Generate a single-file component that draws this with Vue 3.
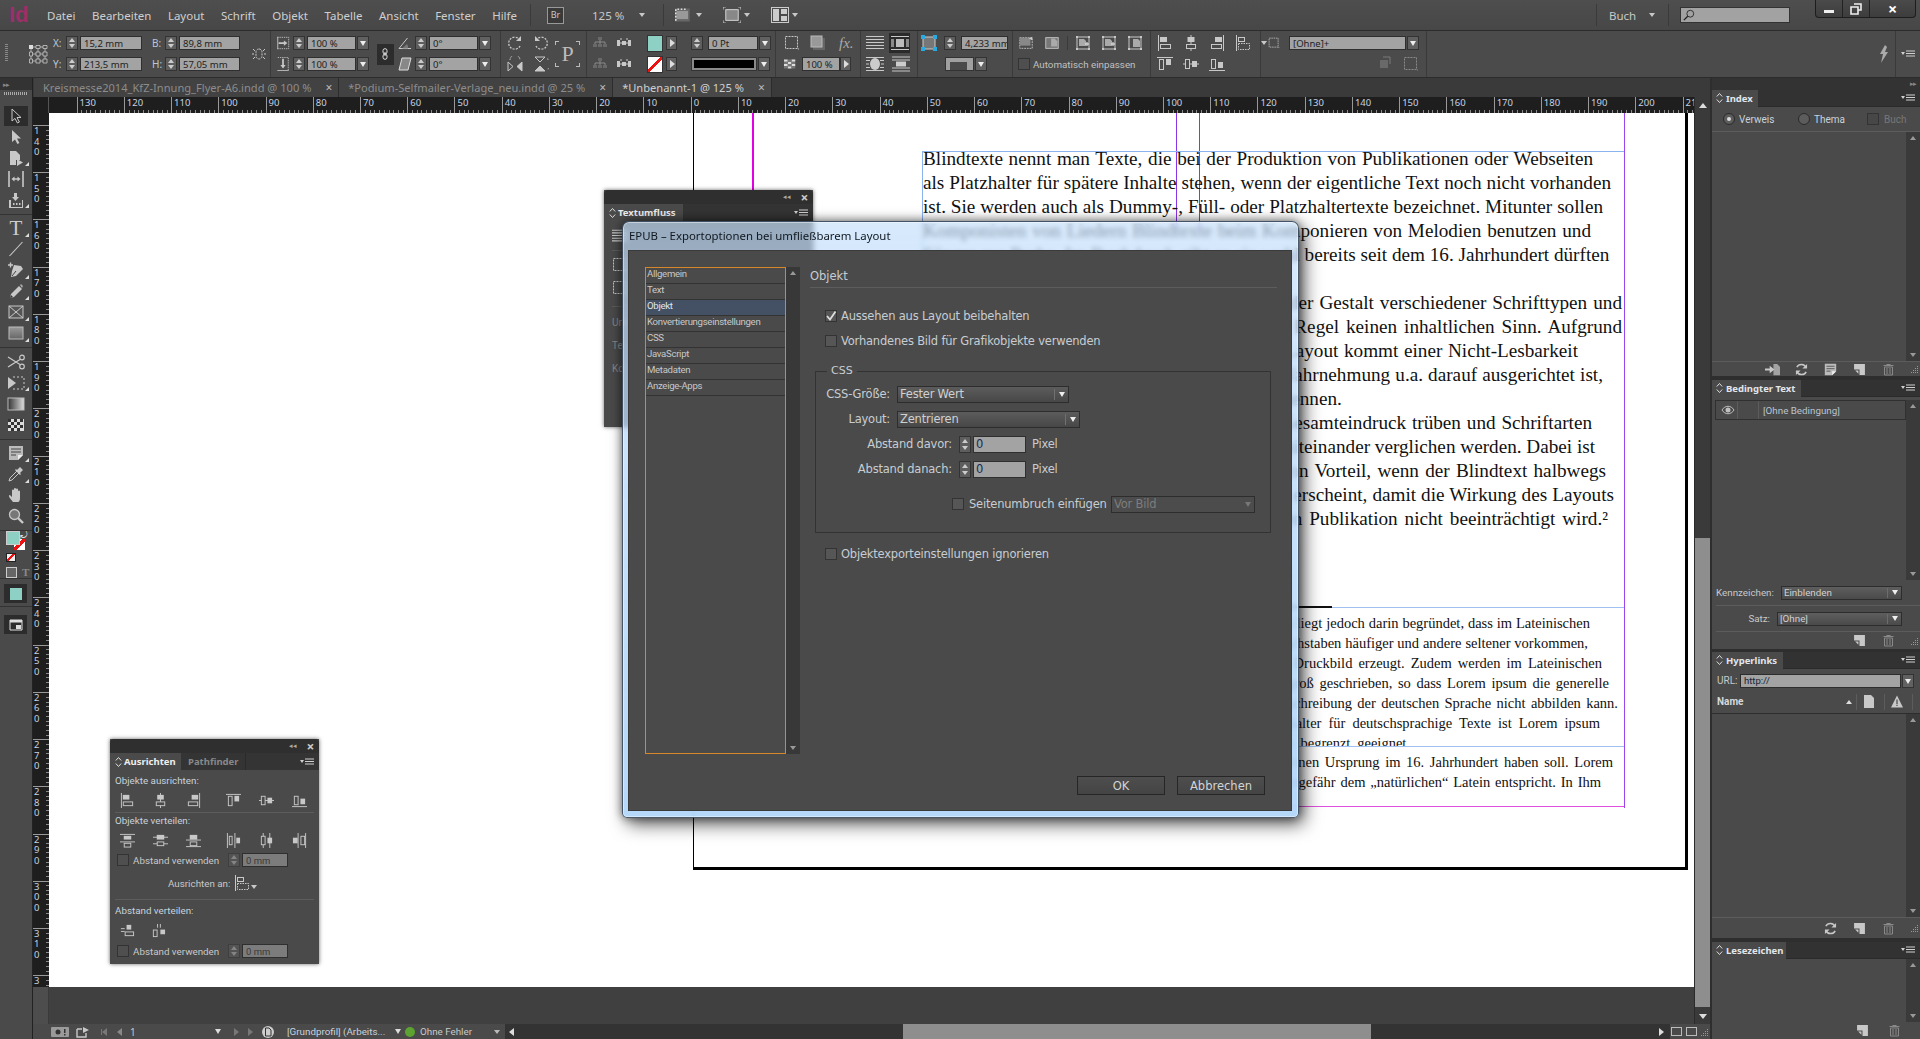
<script setup>
const menus = ['Datei', 'Bearbeiten', 'Layout', 'Schrift', 'Objekt', 'Tabelle', 'Ansicht', 'Fenster', 'Hilfe']

const tabs = [
  { name: 'Kreismesse2014_KfZ-Innung_Flyer-A6.indd @ 100 %' },
  { name: '*Podium-Selfmailer-Verlage_neu.indd @ 25 %' },
  { name: '*Unbenannt-1 @ 125 %', active: true }
]

const hruler = []
for (let v = 130; v > 0; v -= 10) hruler.push(v)
for (let v = 0; v <= 210; v += 10) hruler.push(v)
const vruler = []
for (let v = 140; v <= 320; v += 10) vruler.push(String(v).split(''))

const toolGroups = [
  [{ i: 'sel', on: true }, { i: 'dsel' }, { i: 'pagetool', more: true }, { i: 'gap' }, { i: 'collect', more: true }],
  [{ i: 'T', more: true }, { i: 'line' }, { i: 'pen', more: true }, { i: 'pencil', more: true }, { i: 'framex', more: true }, { i: 'rect', more: true }],
  [{ i: 'scissors' }, { i: 'free', more: true }, { i: 'gradient' }, { i: 'feather' }],
  [{ i: 'note', more: true }, { i: 'dropper', more: true }, { i: 'hand' }, { i: 'zoom' }]
]

const body = [
  { t: 'Blindtexte nennt man Texte, die bei der Produktion von Publikationen oder Webseiten', w: 670 },
  { t: 'als Platzhalter für spätere Inhalte stehen, wenn der eigentliche Text noch nicht vorhanden', w: 688 },
  { t: 'ist. Sie werden auch als Dummy-, Füll- oder Platzhaltertexte bezeichnet. Mitunter sollen', w: 680 },
  { t: 'Komponisten von Liedern Blindtexte beim Komponieren von Melodien benutzen und', w: 668 },
  { t: 'Sänger zur Probe. Im Buchdruck gibt es sie wohl bereits seit dem 16. Jahrhundert dürften', w: 664 },
  { t: '\u00a0', w: 100 },
  { t: 'Sie dienen der Beurteilung vom Layout sowie der Gestalt verschiedener Schrifttypen und', w: 699 },
  { t: 'Schriftgraden und Schriftbildern, haben in der Regel keinen inhaltlichen Sinn. Aufgrund', w: 699 },
  { t: 'seiner Funktion als reiner Füllstoff im ganzen Layout kommt einer Nicht-Lesbarkeit', w: 655 },
  { t: 'eine große Bedeutung zu, da die menschliche Wahrnehmung u.a. darauf ausgerichtet ist,', w: 680 },
  { t: 'bestimmte Muster und Buchstabenfolgen zu erkennen.', w: 415 },
  { t: 'Denn gut lesbarer Blindtext könnte wohl den Gesamteindruck trüben und Schriftarten', w: 669 },
  { t: 'könnten dann nicht mehr objektiv und neutral miteinander verglichen werden. Dabei ist', w: 666 },
  { t: 'es jedoch für die Beurteilung eines Entwurfs von Vorteil, wenn der Blindtext halbwegs', w: 683 },
  { t: 'realistisch und der späteren Textsorte angepasst erscheint, damit die Wirkung des Layouts', w: 691 },
  { t: 'im Gesamten und auf den Leser in der späteren Publikation nicht beeinträchtigt wird.²', w: 685 }
]

const foot1 = [
  { t: 'Die Eignung von Lorem ipsum als Platzhalter für alle Sprachen liegt jedoch darin begründet, dass im Lateinischen', w: 668 },
  { t: 'so wie auch in den meisten europäischen Sprachen einzelne Buchstaben häufiger und andere seltener vorkommen,', w: 666 },
  { t: 'was bei der Gestaltung eines Entwurfs ein sehr realistisches Druckbild erzeugt. Zudem werden im Lateinischen', w: 680 },
  { t: 'nur die Satzanfänge und Eigennamen, nicht die Substantive groß geschrieben, so dass Lorem ipsum die generelle', w: 687 },
  { t: 'Erscheinung von Texten und insbesondere die spezielle Großschreibung der deutschen Sprache nicht abbilden kann.', w: 696 },
  { t: 'Als alleiniger und für wirklich alle Fälle brauchbarer Platzhalter für deutschsprachige Texte ist Lorem ipsum', w: 678 },
  { t: 'somit trotz seiner weiten Verbreitung in der Praxis nur sehr begrenzt geeignet.', w: 488 }
]
const foot2 = [
  { t: 'Es heißt oft, dass der Blindtext auf Cicero zurückgeht und seinen Ursprung im 16. Jahrhundert haben soll. Lorem', w: 691 },
  { t: 'ipsum ist kein echtes Latein, auch wenn es in seiner Gestalt ungefähr dem „natürlichen“ Latein entspricht. In Ihm', w: 679 }
]

const listItems = ['Allgemein', 'Text', 'Objekt', 'Konvertierungseinstellungen', 'CSS', 'JavaScript', 'Metadaten', 'Anzeige-Apps']

const alignRow = ['alignL', 'alignCH', 'alignR', 'alignT', 'alignCV', 'alignB']
const distRow = ['distT', 'distCV', 'distB', 'distL', 'distCH', 'distR']
</script>

<template>
  <div class="app">
    <!-- icon sprite -->
    <svg class="sprite" width="0" height="0">
      <defs>
        <linearGradient id="gv" x1="0" y1="0" x2="0" y2="1"><stop offset="0" stop-color="#999" /><stop offset="1" stop-color="#666" /></linearGradient>
        <linearGradient id="gh" x1="0" y1="0" x2="1" y2="0"><stop offset="0" stop-color="#333" /><stop offset="1" stop-color="#ddd" /></linearGradient>
        <symbol id="sel" viewBox="0 0 16 16"><path d="M4 1v12l3-2.600 2.400 4.600 2-1-2.400-4.500h4z" fill="none" stroke="currentColor" /></symbol>
        <symbol id="dsel" viewBox="0 0 16 16"><path d="M4 1v12l3-2.600 2.400 4.600 2-1-2.400-4.500h4z" fill="currentColor" /></symbol>
        <symbol id="pagetool" viewBox="0 0 16 16"><path d="M2 1h6l4 4v5H8v5H2z" fill="currentColor" /><path d="M9 9l6 3.500L9 16z" fill="currentColor" /></symbol>
        <symbol id="gap" viewBox="0 0 16 16"><path d="M1 0v16M15 0v16" stroke="currentColor" stroke-width="1.600" /><path d="M3.500 8l3-2.500v1.800h3V5.500l3 2.500-3 2.500V8.700h-3v1.800z" fill="currentColor" /></symbol>
        <symbol id="collect" viewBox="0 0 16 16"><path d="M1 8h2v7h11V8h1v8H1z" fill="currentColor" /><path d="M6 1h3v4h2L7.500 9 4 5h2z" fill="currentColor" /><path d="M5 11h1.500v2H5zM8 11h1.500v2H8zM11 11h1.500v2H11z" fill="currentColor" /></symbol>
        <symbol id="line" viewBox="0 0 16 16"><path d="M1.500 15L14.500 1" stroke="currentColor" stroke-width="1.100" /></symbol>
        <symbol id="pen" viewBox="0 0 18 16"><path d="M1 3h5M3.500.5v5" stroke="currentColor" stroke-width="1.400" /><path d="M7 3l7 1 2 3-7 7-5 1 1-6z" fill="currentColor" /><path d="M5 14l4-5" stroke="#444" /></symbol>
        <symbol id="pencil" viewBox="0 0 16 16"><path d="M2 15l1-4 8-8 3 3-8 8z" fill="currentColor" /><path d="M12 2l1-1 2 2-1 2z" fill="#aaa" /><path d="M2 15l1-3 2 2z" fill="#333" /></symbol>
        <symbol id="framex" viewBox="0 0 16 16"><rect x="1" y="2" width="14" height="12" fill="#555" stroke="currentColor" /><path d="M1 2l14 12M15 2L1 14" stroke="currentColor" /></symbol>
        <symbol id="rect" viewBox="0 0 16 16"><rect x="1" y="2" width="14" height="12" fill="url(#gv)" stroke="#bbb" /></symbol>
        <symbol id="scissors" viewBox="0 0 18 16"><circle cx="15" cy="3.500" r="2.300" fill="none" stroke="currentColor" stroke-width="1.200" /><circle cx="15" cy="12.500" r="2.300" fill="none" stroke="currentColor" stroke-width="1.200" /><path d="M1 3l12 7.500M1 13l12-7.500" stroke="currentColor" stroke-width="1.300" /></symbol>
        <symbol id="free" viewBox="0 0 18 16"><path d="M1 2v12l8-6z" fill="currentColor" /><path d="M6 2h11v12H6" fill="none" stroke="currentColor" stroke-dasharray="2 2" /></symbol>
        <symbol id="gradient" viewBox="0 0 16 16"><rect x="0" y="2" width="16" height="12" fill="url(#gh)" stroke="#bbb" /></symbol>
        <symbol id="feather" viewBox="0 0 16 16"><rect x="0" y="2" width="16" height="12" fill="#ddd" /><path d="M0 2h3v3H0zM6 2h3v3H6zM12 2h3v3h-3zM3 5h3v3H3zM9 5h3v3H9zM0 8h3v3H0zM6 8h3v3H6zM12 8h3v3h-3zM3 11h3v3H3zM9 11h3v3H9z" fill="#333" /></symbol>
        <symbol id="note" viewBox="0 0 16 16"><path d="M1 1h14v9l-5 5H1z" fill="#bbb" /><path d="M3 4h10M3 7h10M3 10h5" stroke="#444" /><path d="M10 15v-5h5z" fill="#eee" /></symbol>
        <symbol id="dropper" viewBox="0 0 16 16"><path d="M1 15l1-3 7-7 2 2-7 7z" fill="none" stroke="currentColor" /><path d="M9 4l2-2 1-1 3 3-1 1-2 2 1 1-1 1-5-5 1-1z" fill="currentColor" /></symbol>
        <symbol id="hand" viewBox="0 0 16 16"><path d="M5 15C3.500 13 .5 10 1 8.500s2 .5 3 1.500V3.500a1 1 0 012 0V8V2a1 1 0 012 0v6V2.500a1 1 0 012 0V8V4.500a1 1 0 012 0V11c0 2.500-1 4-2 4z" fill="currentColor" /></symbol>
        <symbol id="zoom" viewBox="0 0 16 16"><circle cx="6.500" cy="6.500" r="5" fill="#777" stroke="currentColor" stroke-width="1.300" /><path d="M10 10l5 5" stroke="currentColor" stroke-width="2.400" /></symbol>
        <symbol id="prevmode" viewBox="0 0 14 12"><path d="M1 1h12v10H1z" fill="none" stroke="#ddd" /><path d="M1 1h12v2.500H1z" fill="#ddd" /><path d="M7 6h5v4H7z" fill="#ddd" /></symbol>

        <symbol id="refpt" viewBox="0 0 20 20"><path d="M5 3h6M11 3h6M5 10h12M5 17h12M3 5v10M10 5v10M17 5v10" stroke="currentColor" stroke-width=".8" /><path d="M1 1h4v4H1z" fill="#ddd" /><path d="M8 1.500h4v3H8zM15 1.500h4v3h-4zM1.500 8h3v4h-3zM8 8h4v4H8zM15 8h4v4h-4zM1.500 15h3v4h-3zM8 15h4v4H8zM15 15h4v4h-4z" fill="#4a4a4a" stroke="currentColor" stroke-width=".8" /></symbol>
        <symbol id="link" viewBox="0 0 16 16"><rect x="5" y="3" width="6" height="10" rx="3" fill="none" stroke="currentColor" stroke-dasharray="2 1" /><path d="M2 3l2 2M14 3l-2 2M1 8h2M13 8h2M2 13l2-2M14 13l-2-2" stroke="currentColor" /></symbol>
        <symbol id="scaleh" viewBox="0 0 14 16"><path d="M.5 1.500h13v13H.5" fill="none" stroke="currentColor" stroke-dasharray="1.500 1" /><path d="M1 1v14" stroke="currentColor" /><path d="M2 7h6V5l4 3-4 3V9H2z" fill="currentColor" /></symbol>
        <symbol id="scalev" viewBox="0 0 14 16"><path d="M1 .5h12v15" fill="none" stroke="currentColor" stroke-dasharray="1.500 1" /><path d="M.5 15.500h13" stroke="currentColor" /><path d="M6 2h2v7h2l-3 4-3-4h2z" fill="currentColor" /></symbol>
        <symbol id="chain" viewBox="0 0 12 18"><rect x="3" y="1" width="6" height="8" rx="3" fill="none" stroke="#ddd" stroke-width="1.500" /><rect x="3" y="9" width="6" height="8" rx="3" fill="none" stroke="#ddd" stroke-width="1.500" /><path d="M6 6v6" stroke="#ddd" stroke-width="1.500" /></symbol>
        <symbol id="angle" viewBox="0 0 14 14"><path d="M1 12.500L9.500 2M1 12.500h12" fill="none" stroke="currentColor" /><path d="M9 8a5 5 0 011 4.500H4z" fill="#777" /></symbol>
        <symbol id="shear" viewBox="0 0 14 14"><path d="M4 1h9l-3 12H1z" fill="#888" stroke="#ddd" /></symbol>
        <symbol id="rotcw" viewBox="0 0 16 16"><path d="M13 11a6 6 0 11-1-7" fill="none" stroke="currentColor" stroke-dasharray="2 1.200" stroke-width="1.300" /><path d="M14 1v5h-5z" fill="currentColor" /></symbol>
        <symbol id="rotccw" viewBox="0 0 16 16"><path d="M3 11a6 6 0 101-7" fill="none" stroke="currentColor" stroke-dasharray="2 1.200" stroke-width="1.300" /><path d="M2 1v5h5z" fill="currentColor" /></symbol>
        <symbol id="fliph" viewBox="0 0 16 16"><path d="M1 15V6l5 4.500zM15 15V6l-5 4.500z" fill="none" stroke="currentColor" /><path d="M15 15V6l-5 4.500z" fill="currentColor" /><path d="M3 4a5 5 0 0110 0" fill="none" stroke="currentColor" stroke-dasharray="1.500 1" /></symbol>
        <symbol id="flipv" viewBox="0 0 16 16"><path d="M2 1h10L7 6zM2 15h10L7 10z" fill="none" stroke="currentColor" /><path d="M2 15h10L7 10z" fill="currentColor" /><path d="M14 3a5 5 0 010 10" fill="none" stroke="currentColor" stroke-dasharray="1.500 1" /></symbol>
        <symbol id="tree1" viewBox="0 0 16 16"><path d="M8 5v2M3 9V7h10v2M8 7v2" stroke="currentColor" fill="none" /><path d="M6 2h4v3H6zM1 9h4v3H1zM6 9h4v3H6zM11 9h4v3h-4z" fill="#888" /></symbol>
        <symbol id="tree2" viewBox="0 0 16 16"><path d="M5 5V3M11 5V3M3 8h10" stroke="currentColor" /><path d="M6 6h4v4H6zM1 5h3v6H1zM12 5h3v6h-3z" fill="currentColor" /></symbol>

        <symbol id="fr" viewBox="0 0 16 16"><rect x="1.500" y="1.500" width="12" height="12" fill="none" stroke="currentColor" stroke-dasharray="2 1" /><path d="M14 14l1 0" stroke="currentColor" /></symbol>
        <symbol id="shadow" viewBox="0 0 16 16"><rect x="3" y="3" width="12" height="12" fill="#666" /><rect x="1" y="1" width="11" height="11" fill="#999" stroke="#bbb" /></symbol>
        <symbol id="check" viewBox="0 0 16 16"><path d="M0 2h5v3H0zM10 2h5v3h-5zM5 5h5v3H5zM0 8h5v3H0zM10 8h5v3h-5zM5 11h5v3H5z" fill="#ddd" /><path d="M5 2h5v3H5zM0 5h5v3H0zM10 5h5v3h-5zM5 8h5v3H5zM0 11h5v3H0zM10 11h5v3h-5z" fill="#777" /></symbol>
        <symbol id="wrap0" viewBox="0 0 18 16"><path d="M0 1.500h18M0 4.500h18M0 7.500h18M0 10.500h18M0 13.500h18" stroke="currentColor" stroke-width="1.200" /></symbol>
        <symbol id="wrap1" viewBox="0 0 18 16"><path d="M0 1.500h18M0 14.500h18M0 4v8M18 4v8M2 4v8M16 4v8" stroke="currentColor" stroke-width="1.200" /><rect x="5" y="4" width="8" height="8" fill="#bbb" /></symbol>
        <symbol id="wrap2" viewBox="0 0 18 16"><path d="M0 1.500h18M0 14.500h18M0 4.500h4M14 4.500h4M0 8h3M15 8h3M0 11.500h4M14 11.500h4" stroke="currentColor" stroke-width="1.200" /><ellipse cx="9" cy="8" rx="5" ry="6" fill="#ccc" /></symbol>
        <symbol id="wrap3" viewBox="0 0 18 16"><path d="M0 1h18M0 4h18M0 12h18M0 15h18" stroke="currentColor" stroke-width="1.200" /><rect x="4" y="5.500" width="10" height="5" fill="#ccc" /></symbol>
        <symbol id="corner" viewBox="0 0 16 16"><rect x="2" y="2" width="12" height="12" fill="#777" stroke="#ccc" /><path d="M0 0h4v4H0zM12 0h4v4h-4zM0 12h4v4H0zM12 12h4v4h-4z" fill="#29abe2" /></symbol>
        <symbol id="fit1" viewBox="0 0 18 16"><rect x="2" y="2" width="14" height="12" fill="none" stroke="currentColor" stroke-dasharray="2 1" /><rect x="2" y="2" width="12" height="9" fill="#888" /><path d="M12 3l4-2v4z" fill="currentColor" /></symbol>
        <symbol id="fit2" viewBox="0 0 18 16"><rect x="2" y="2" width="14" height="12" fill="#777" stroke="currentColor" /><path d="M8 3h4l3 3v6H8z" fill="#aaa" /></symbol>
        <symbol id="fit3" viewBox="0 0 16 16"><rect x="2" y="2" width="12" height="12" fill="none" stroke="currentColor" /><path d="M1 1h2v2H1zM13 1h2v2h-2zM1 13h2v2H1zM13 13h2v2h-2z" fill="currentColor" /><path d="M4 4h5l2 2v5H4z" fill="#aaa" /><path d="M10 9h4M12 7v4" stroke="#eee" /></symbol>
        <symbol id="fit4" viewBox="0 0 16 16"><rect x="2" y="2" width="12" height="12" fill="none" stroke="currentColor" /><path d="M1 1h2v2H1zM13 1h2v2h-2zM1 13h2v2H1zM13 13h2v2h-2z" fill="currentColor" /><path d="M6 4h5l2 2v6H6z" fill="#aaa" /></symbol>
        <symbol id="chSlash" viewBox="0 0 16 16"><path d="M2 4h8v8H2z" fill="#888" /><path d="M5 1h7v7" fill="none" stroke="#aaa" /></symbol>

        <symbol id="alignL" viewBox="0 0 16 16"><path d="M1.500 0v16" stroke="currentColor" /><rect x="3" y="2" width="7" height="5" fill="currentColor" /><rect x="3.500" y="9.500" width="10" height="4" fill="none" stroke="currentColor" /></symbol>
        <symbol id="alignCH" viewBox="0 0 16 16"><path d="M8 0v16" stroke="currentColor" /><rect x="4.500" y="2" width="7" height="5" fill="currentColor" /><rect x="3.500" y="9.500" width="9" height="4" fill="#4a4a4a" stroke="currentColor" /></symbol>
        <symbol id="alignR" viewBox="0 0 16 16"><path d="M14.500 0v16" stroke="currentColor" /><rect x="6" y="2" width="7" height="5" fill="currentColor" /><rect x="2.500" y="9.500" width="10" height="4" fill="none" stroke="currentColor" /></symbol>
        <symbol id="alignT" viewBox="0 0 16 16"><path d="M0 1.500h16" stroke="currentColor" /><rect x="2.500" y="3.500" width="4" height="10" fill="none" stroke="currentColor" /><rect x="9" y="3" width="5" height="6" fill="currentColor" /></symbol>
        <symbol id="alignCV" viewBox="0 0 16 16"><path d="M0 8h16" stroke="currentColor" /><rect x="2.500" y="3.500" width="4" height="9" fill="#4a4a4a" stroke="currentColor" /><rect x="9" y="5" width="5" height="6" fill="currentColor" /></symbol>
        <symbol id="alignB" viewBox="0 0 16 16"><path d="M0 14.500h16" stroke="currentColor" /><rect x="2.500" y="3.500" width="4" height="9" fill="none" stroke="currentColor" /><rect x="9" y="6" width="5" height="6" fill="currentColor" /></symbol>
        <symbol id="distT" viewBox="0 0 16 16"><path d="M0 1.500h16M0 9.500h16" stroke="currentColor" /><rect x="4" y="3" width="8" height="4" fill="currentColor" /><rect x="4.500" y="11" width="7" height="4" fill="none" stroke="currentColor" /></symbol>
        <symbol id="distCV" viewBox="0 0 16 16"><path d="M0 4.500h16M0 11.500h16" stroke="currentColor" /><rect x="4" y="2" width="8" height="5" fill="currentColor" /><rect x="4.500" y="9.500" width="7" height="4" fill="#4a4a4a" stroke="currentColor" /></symbol>
        <symbol id="distB" viewBox="0 0 16 16"><path d="M0 7.500h16M0 14.500h16" stroke="currentColor" /><rect x="4" y="2" width="8" height="5" fill="currentColor" /><rect x="4.500" y="9.500" width="7" height="4" fill="none" stroke="currentColor" /></symbol>
        <symbol id="distL" viewBox="0 0 16 16"><path d="M1.500 0v16M9.500 0v16" stroke="currentColor" /><rect x="3.500" y="3.500" width="3" height="9" fill="none" stroke="currentColor" /><rect x="11" y="5" width="4" height="6" fill="currentColor" /></symbol>
        <symbol id="distCH" viewBox="0 0 16 16"><path d="M4.500 0v16M11.500 0v16" stroke="currentColor" /><rect x="2.500" y="3.500" width="4" height="9" fill="#4a4a4a" stroke="currentColor" /><rect x="9" y="5" width="5" height="6" fill="currentColor" /></symbol>
        <symbol id="distR" viewBox="0 0 16 16"><path d="M6.500 0v16M14.500 0v16" stroke="currentColor" /><rect x="1" y="5" width="5" height="6" fill="currentColor" /><rect x="9.500" y="3.500" width="4" height="9" fill="none" stroke="currentColor" /></symbol>
        <symbol id="alignTo" viewBox="0 0 16 16"><path d="M1.500 0v16" stroke="currentColor" /><rect x="3.500" y="2.500" width="6" height="4" fill="none" stroke="currentColor" /><rect x="3.500" y="8.500" width="11" height="6" fill="none" stroke="currentColor" stroke-dasharray="1.500 1" /></symbol>
        <symbol id="spaceV" viewBox="0 0 16 16"><path d="M1 6h4M1 9h4" stroke="currentColor" /><rect x="7" y="2" width="5" height="5" fill="currentColor" /><rect x="5.500" y="9.500" width="9" height="4" fill="none" stroke="currentColor" /></symbol>
        <symbol id="spaceH" viewBox="0 0 16 16"><path d="M7 1v4M10 1v4" stroke="currentColor" /><rect x="2.500" y="7.500" width="4" height="7" fill="none" stroke="currentColor" /><rect x="10" y="7" width="5" height="5" fill="currentColor" /></symbol>

        <symbol id="pmenu" viewBox="0 0 14 8"><path d="M0 2h4L2 5z" fill="currentColor" /><path d="M5 1h9M5 3.500h9M5 6h9" stroke="currentColor" /></symbol>
        <symbol id="newpg" viewBox="0 0 12 12"><path d="M1 1h10v10H6V6H1z" fill="currentColor" /><path d="M2 7h3v3z" fill="currentColor" /></symbol>
        <symbol id="trash" viewBox="0 0 12 13"><path d="M4 1h4v1h3v1H1V2h3z" fill="currentColor" /><path d="M2 4h8v8H2z" fill="none" stroke="currentColor" /><path d="M4.500 5v6M7.500 5v6" stroke="currentColor" /></symbol>
        <symbol id="refresh" viewBox="0 0 14 14"><path d="M12 5a5.500 5.500 0 00-10-.5M2 9a5.500 5.500 0 0010 .5" fill="none" stroke="currentColor" stroke-width="1.600" /><path d="M13 1v5H8zM1 13V8h5z" fill="currentColor" /></symbol>
        <symbol id="eye" viewBox="0 0 14 10"><path d="M1 5c3-5 9-5 12 0-3 5-9 5-12 0z" fill="none" stroke="currentColor" /><circle cx="7" cy="5" r="2.500" fill="currentColor" /></symbol>
        <symbol id="grip" viewBox="0 0 8 8"><path d="M6 1h1v1H6zM4 3h1v1H4zM6 3h1v1H6zM2 5h1v1H2zM4 5h1v1H4zM6 5h1v1H6zM0 7h1v1H0zM2 7h1v1H2zM4 7h1v1H4zM6 7h1v1H6z" fill="currentColor" /></symbol>
        <symbol id="warn" viewBox="0 0 12 12"><path d="M6 0l6 12H0z" fill="currentColor" /><path d="M5.400 4h1.200v4.500H5.400zM5.400 9.300h1.200v1.200H5.400z" fill="#4a4a4a" /></symbol>
        <symbol id="doc" viewBox="0 0 12 13"><path d="M1 0h7l3 3v10H1z" fill="currentColor" /></symbol>
        <symbol id="chev" viewBox="0 0 7 12"><path d="M.8 4.500L3.500 1.500l2.700 3M.8 7.500l2.700 3 2.700-3" fill="none" stroke="currentColor" /></symbol>
        <symbol id="arrowIn" viewBox="0 0 16 12"><path d="M0 5h5V2l5 4-5 4V7H0z" fill="currentColor" /><path d="M9 0h4l3 3v9H9z" fill="currentColor" opacity=".7" /></symbol>
        <symbol id="bolt" viewBox="0 0 10 18"><path d="M6 0L1 9h3L2 18l7-11H6l2-5z" fill="currentColor" /></symbol>
        <symbol id="tick" viewBox="0 0 12 12"><path d="M2 6l3 3.500L10.500 1.500" fill="none" stroke="#ddd" stroke-width="1.800" /></symbol>
        <symbol id="screen" viewBox="0 0 22 16"><path d="M0 0h18v16H0z" fill="#666" /><path d="M2 3h14v10H2z" fill="#999" /><path d="M0 1h2v2H0zM0 5h2v2H0zM0 9h2v2H0zM0 13h2v2H0zM3 0h2v2H3zM7 0h2v2H7zM11 0h2v2h-2z" fill="#ddd" /></symbol>
        <symbol id="screen2" viewBox="0 0 20 18"><rect x="3" y="3" width="14" height="12" fill="#888" stroke="#ddd" /><path d="M0 3V0h3M17 0h3v3M20 15v3h-3M3 18H0v-3" fill="none" stroke="#ccc" /></symbol>
        <symbol id="arrange" viewBox="0 0 18 16"><rect x=".5" y=".5" width="17" height="15" fill="none" stroke="#ccc" /><rect x="2" y="2" width="6" height="12" fill="#ccc" /><rect x="10" y="2" width="6" height="5" fill="#ccc" /><rect x="10" y="9" width="6" height="5" fill="#ccc" /></symbol>
        <symbol id="share" viewBox="0 0 14 12"><path d="M1 3h5M1 3v8h9V7" fill="none" stroke="currentColor" stroke-width="1.400" /><path d="M7 1l6 3-6 3z" fill="currentColor" /></symbol>
        <symbol id="prefl" viewBox="0 0 18 10"><rect width="18" height="10" rx="1" fill="#9a9a9a" /><circle cx="7" cy="5" r="2.500" fill="#333" /><path d="M13 2h1.500v4H13zM13 7h1.500v1.500H13z" fill="#333" /></symbol>
        <symbol id="pagesm" viewBox="0 0 12 14"><circle cx="6" cy="7" r="6" fill="#ccc" /><path d="M3.500 3h3.500l2 2v6H3.500z" fill="none" stroke="#333" /></symbol>
      </defs>
    </svg>

    <header class="menubar">
      <span class="logo">Id</span>
      <nav class="menus"><span v-for="m in menus" :key="m">{{ m }}</span></nav>
      <i class="vsep s1"></i>
      <span class="br">Br</span>
      <span class="zoomlvl">125 %</span>
      <i class="caret c1"></i>
      <i class="vsep s2"></i>
      <span class="menu-ico"><svg class="mi"><use href="#screen" /></svg><i class="caret"></i></span>
      <span class="menu-ico"><svg class="mi"><use href="#screen2" /></svg><i class="caret"></i></span>
      <span class="menu-ico"><svg class="mi"><use href="#arrange" /></svg><i class="caret"></i></span>
      <span class="flex1"></span>
      <i class="vsep"></i>
      <span class="buch">Buch</span>
      <i class="caret c2"></i>
      <i class="vsep"></i>
      <span class="search"><svg class="srch" viewBox="0 0 14 14"><circle cx="8.500" cy="5.500" r="4" fill="none" stroke="#222" /><path d="M5.500 8.500L1 13" stroke="#222" stroke-width="1.500" /></svg></span>
      <div class="winbtns">
        <span><i class="w-min"></i></span>
        <span><svg class="w-res" viewBox="0 0 12 12"><path d="M4 1h7v6H8M1 4h7v7H1z" fill="none" stroke="#eee" stroke-width="1.600" /></svg></span>
        <span class="w-x">×</span>
      </div>
    </header>

    <section class="ctl">
      <div class="cell grip"><i></i></div>
      <div class="cell ctr"><svg class="ref"><use href="#refpt" /></svg></div>
      <div class="cell col">
        <div class="row"><label class="l13">X:</label><i class="spin"></i><span class="inp w62">15,2 mm</span></div>
        <div class="row"><label class="l13">Y:</label><i class="spin"></i><span class="inp w62">213,5 mm</span></div>
      </div>
      <div class="cell col">
        <div class="row"><label class="l13">B:</label><i class="spin"></i><span class="inp w61">89,8 mm</span></div>
        <div class="row"><label class="l13">H:</label><i class="spin"></i><span class="inp w61">57,05 mm</span></div>
      </div>
      <div class="cell ctr"><svg class="i"><use href="#link" /></svg></div>
      <div class="cell col sep p6">
        <div class="row"><svg class="i14"><use href="#scaleh" /></svg><i class="spin ml4"></i><span class="inp w49">100 %</span><i class="drop"></i></div>
        <div class="row"><svg class="i14"><use href="#scalev" /></svg><i class="spin ml4"></i><span class="inp w49">100 %</span><i class="drop"></i></div>
      </div>
      <div class="cell ctr"><span class="chainbtn"><svg class="i12"><use href="#chain" /></svg></span></div>
      <div class="cell col">
        <div class="row"><svg class="i14"><use href="#angle" /></svg><i class="spin ml3"></i><span class="inp w49">0°</span><i class="drop"></i></div>
        <div class="row"><svg class="i14"><use href="#shear" /></svg><i class="spin ml3"></i><span class="inp w49">0°</span><i class="drop"></i></div>
      </div>
      <div class="cell col sep p7">
        <div class="row g11"><svg class="i"><use href="#rotcw" /></svg><svg class="i"><use href="#rotccw" /></svg></div>
        <div class="row g11"><svg class="i"><use href="#fliph" /></svg><svg class="i"><use href="#flipv" /></svg></div>
      </div>
      <div class="cell ctr"><span class="pbox">P</span></div>
      <div class="cell col sep p6">
        <div class="row g8"><svg class="i dim"><use href="#tree1" /></svg><svg class="i"><use href="#tree2" /></svg></div>
        <div class="row g8"><svg class="i dim"><use href="#tree1" /></svg><svg class="i"><use href="#tree2" /></svg></div>
      </div>
      <div class="cell col">
        <div class="row"><i class="swatch"></i><i class="play"></i></div>
        <div class="row"><i class="swatch stroke"></i><i class="play"></i></div>
      </div>
      <div class="cell col">
        <div class="row"><i class="spin"></i><span class="inp w50 ml3">0 Pt</span><i class="drop"></i></div>
        <div class="row"><span class="strokeline"><b></b></span><i class="drop"></i></div>
      </div>
      <div class="cell col sep p9">
        <div class="row g10"><svg class="i"><use href="#fr" /></svg><svg class="i"><use href="#shadow" /></svg><span class="fx">fx.</span></div>
        <div class="row"><svg class="i12"><use href="#check" /></svg><span class="inp w38 ml6">100 %</span><i class="play"></i></div>
      </div>
      <div class="cell col sep p6">
        <div class="row g6"><svg class="i18"><use href="#wrap0" /></svg><span class="wrapon"><svg class="i18"><use href="#wrap1" /></svg></span></div>
        <div class="row g6"><svg class="i18"><use href="#wrap2" /></svg><svg class="i18 ml3"><use href="#wrap3" /></svg></div>
      </div>
      <div class="cell col sep p4">
        <div class="row"><svg class="i"><use href="#corner" /></svg><i class="spin ml5"></i><span class="inp w47 ml3">4,233 mm</span></div>
        <div class="row"><span class="cornerbox ml21"></span><i class="drop"></i></div>
      </div>
      <div class="cell col sep p6">
        <div class="row g10"><svg class="i"><use href="#fit1" /></svg><svg class="i"><use href="#fit2" /></svg><i class="vs"></i><svg class="i"><use href="#fit3" /></svg><svg class="i"><use href="#fit3" /></svg><svg class="i"><use href="#fit4" /></svg></div>
        <div class="row"><i class="cbx"></i><span class="auto">Automatisch einpassen</span></div>
      </div>
      <div class="cell col sep p7">
        <div class="row g10"><svg class="i"><use href="#alignL" /></svg><svg class="i"><use href="#alignCH" /></svg><svg class="i"><use href="#alignR" /></svg><svg class="i"><use href="#alignTo" /></svg><i class="caret"></i></div>
        <div class="row g10"><svg class="i"><use href="#alignT" /></svg><svg class="i"><use href="#alignCV" /></svg><svg class="i"><use href="#alignB" /></svg></div>
      </div>
      <div class="cell col sep p8">
        <div class="row"><svg class="i12"><use href="#fr" /></svg></div>
      </div>
      <div class="cell col">
        <div class="row"><span class="inp w117">[Ohne]+</span><i class="drop"></i></div>
        <div class="row end"><svg class="i18 dim"><use href="#chSlash" /></svg><svg class="i18 dim ml12"><use href="#fr" /></svg></div>
      </div>
      <div class="cell sep"></div>
      <div class="cell ctr"><svg class="bolt"><use href="#bolt" /></svg></div>
      <div class="cell ctr sep"><svg class="pm"><use href="#pmenu" /></svg></div>
    </section>

    <div class="work">
      <aside class="tools">
        <div class="strip"><span class="chevs">▸▸</span></div>
        <div class="hgrip"></div>
        <div v-for="(g, gi) in toolGroups" :key="gi" class="tgroup" :class="{ first: gi === 0 }">
          <div v-for="t in g" :key="t.i" class="tool" :class="{ on: t.on, more: t.more }">
            <span v-if="t.i === 'T'" class="ttool">T</span>
            <svg v-else class="ti"><use :href="'#' + t.i" /></svg>
          </div>
        </div>
        <div class="tgroup fs">
          <div class="fsbox">
            <i class="fs-fill"></i>
            <i class="fs-stroke"></i>
            <i class="fs-def"></i>
            <i class="fs-swap">⤾</i>
          </div>
          <div class="fsmode"><i class="fm-box"></i><span class="fm-t">T</span></div>
        </div>
        <div class="tgroup bt"><div class="darkbtn"><i class="dswatch"></i></div></div>
        <div class="tgroup bt nob"><div class="darkbtn"><svg class="i14"><use href="#prevmode" /></svg></div></div>
      </aside>

      <main class="doc">
        <div class="tabs">
          <div v-for="t in tabs" :key="t.name" class="tab" :class="{ active: t.active }">
            <span>{{ t.name }}</span><em>×</em>
          </div>
        </div>
        <div class="corner"></div>
        <div class="hruler">
          <div v-for="(v, i) in hruler" :key="i" class="hcell">{{ v }}</div>
        </div>
        <div class="vscroll">
          <i class="sb-up"></i>
          <div class="sb-track"><div class="sb-thumb"></div></div>
          <i class="sb-down"></i>
        </div>
        <div class="vruler">
          <div v-for="(d, i) in vruler" :key="i" class="vcell"><span v-for="(c, k) in d" :key="k">{{ c }}</span></div>
        </div>
        <div class="canvas">
          <div class="page"></div>
          <i class="guide g-mag"></i>
          <i class="guide g-a"></i>
          <i class="guide g-b"></i>
          <i class="guide g-r"></i>
          <div class="frame f-body">
            <p v-for="(l, i) in body" :key="i" class="ln" :style="{ width: l.w + 'px' }">{{ l.t }}</p>
          </div>
          <div class="frame f-foot1">
            <p v-for="(l, i) in foot1" :key="i" class="fn" :style="{ width: l.w + 'px' }">{{ l.t }}</p>
          </div>
          <div class="frame f-foot2">
            <p v-for="(l, i) in foot2" :key="i" class="fn" :style="{ width: l.w + 'px' }">{{ l.t }}</p>
          </div>
          <i class="footrule"></i>
        </div>
        <div class="bot-l"></div>
        <div class="bot-m"></div>
        <footer class="status">
          <div class="st-left">
            <svg class="st-pref"><use href="#prefl" /></svg>
            <svg class="st-share"><use href="#share" /></svg>
            <i class="nv nv-first"></i><i class="nv nv-prev"></i>
            <span class="st-num">1</span>
            <i class="tri"></i>
            <i class="nv nv-next"></i><i class="nv nv-last"></i>
            <svg class="st-page"><use href="#pagesm" /></svg>
            <span class="st-prof">[Grundprofil] (Arbeits...</span>
            <i class="tri t2"></i>
            <i class="dot"></i>
            <span class="st-err">Ohne Fehler</span>
            <i class="caret c3"></i>
          </div>
          <div class="hscroll"><i class="hs-l"></i><div class="hs-track"><div class="hs-thumb"></div></div><i class="hs-r"></i></div>
          <div class="st-right"><i class="sq"></i><i class="sq"></i><svg class="i8"><use href="#grip" /></svg></div>
        </footer>
      </main>

      <aside class="panels">
        <div class="strip right"><span class="chevs">▸▸</span></div>
        <section class="pan h286">
          <div class="phead"><div class="ptab t46"><svg class="chev"><use href="#chev" /></svg>Index</div><svg class="pm"><use href="#pmenu" /></svg></div>
          <div class="radios">
            <i class="radio on"></i><span class="rl w65">Verweis</span>
            <i class="radio"></i><span class="rl w59">Thema</span>
            <i class="cbx sm"></i><span class="rl dimt">Buch</span>
          </div>
          <div class="plist"><div class="pscroll"><i class="up"></i><i class="down"></i></div></div>
          <div class="pfoot">
            <svg class="pf"><use href="#arrowIn" /></svg>
            <svg class="pf"><use href="#refresh" /></svg>
            <svg class="pf"><use href="#note" /></svg>
            <svg class="pf"><use href="#newpg" /></svg>
            <svg class="pf dim"><use href="#trash" /></svg>
            <svg class="i8"><use href="#grip" /></svg>
          </div>
        </section>
        <section class="pan h269 mt4">
          <div class="phead"><div class="ptab t89"><svg class="chev"><use href="#chev" /></svg>Bedingter Text</div><svg class="pm"><use href="#pmenu" /></svg></div>
          <div class="plist cond">
            <div class="condrow"><span class="ceye"><svg class="eye"><use href="#eye" /></svg></span><span class="cbx2"></span><span class="ctext">[Ohne Bedingung]</span></div>
            <div class="pscroll"><i class="up"></i><i class="down"></i></div>
          </div>
          <div class="selrow bb"><label>Kennzeichen:</label><span class="pselect"><span>Einblenden</span></span></div>
          <div class="selrow bb"><label>Satz:</label><span class="pselect"><span>[Ohne]</span></span></div>
          <div class="pfoot short">
            <svg class="pf"><use href="#newpg" /></svg>
            <svg class="pf dim"><use href="#trash" /></svg>
            <svg class="i8"><use href="#grip" /></svg>
          </div>
        </section>
        <section class="pan h286 mt3">
          <div class="phead"><div class="ptab t71"><svg class="chev"><use href="#chev" /></svg>Hyperlinks</div><svg class="pm"><use href="#pmenu" /></svg></div>
          <div class="urlrow"><label>URL:</label><span class="urlinp">http://</span><i class="drop"></i></div>
          <div class="namerow"><b>Name</b><i class="upcaret"></i><i class="nsep"></i><svg class="nic"><use href="#doc" /></svg><i class="nsep"></i><svg class="nic w"><use href="#warn" /></svg><i class="nsep"></i></div>
          <div class="plist"><div class="pscroll"><i class="up"></i><i class="down"></i></div></div>
          <div class="pfoot tall">
            <svg class="pf"><use href="#refresh" /></svg>
            <svg class="pf"><use href="#newpg" /></svg>
            <svg class="pf dim"><use href="#trash" /></svg>
            <svg class="i8"><use href="#grip" /></svg>
          </div>
        </section>
        <section class="pan grow mt4">
          <div class="phead"><div class="ptab t74"><svg class="chev"><use href="#chev" /></svg>Lesezeichen</div><svg class="pm"><use href="#pmenu" /></svg></div>
          <div class="plist"><div class="pscroll"><i class="up"></i><i class="down"></i></div></div>
          <div class="pfoot short last">
            <svg class="pf"><use href="#newpg" /></svg>
            <svg class="pf dim"><use href="#trash" /></svg>
          </div>
        </section>
      </aside>
    </div>

    <!-- floating panels -->
    <div class="float align">
      <div class="fl-title"><span>◂◂</span><span class="xx">×</span></div>
      <div class="fl-tabs">
        <div class="fl-tab on"><svg class="chev"><use href="#chev" /></svg>Ausrichten</div>
        <div class="fl-tab off">Pathfinder</div>
        <svg class="pm auto-l"><use href="#pmenu" /></svg>
      </div>
      <div class="fl-body">
        <div class="fl-h">Objekte ausrichten:</div>
        <div class="fl-icons bb1"><svg v-for="n in alignRow" :key="n" class="i"><use :href="'#' + n" /></svg></div>
        <div class="fl-h">Objekte verteilen:</div>
        <div class="fl-icons"><svg v-for="n in distRow" :key="n" class="i"><use :href="'#' + n" /></svg></div>
        <div class="fl-use"><i class="cbx"></i><span>Abstand verwenden</span><i class="spin dimmed"></i><span class="inp dis">0 mm</span></div>
        <div class="fl-to"><span>Ausrichten an:</span><svg class="i"><use href="#alignTo" /></svg><i class="caret"></i></div>
        <div class="fl-h h2">Abstand verteilen:</div>
        <div class="fl-icons two"><svg class="i"><use href="#spaceV" /></svg><svg class="i"><use href="#spaceH" /></svg></div>
        <div class="fl-use u2"><i class="cbx"></i><span>Abstand verwenden</span><i class="spin dimmed"></i><span class="inp dis">0 mm</span></div>
      </div>
    </div>

    <div class="float flow">
      <div class="fl-title"><span>◂◂</span><span class="xx">×</span></div>
      <div class="fl-tabs">
        <div class="fl-tab on wide"><svg class="chev"><use href="#chev" /></svg>Textumfluss</div>
        <svg class="pm auto-l"><use href="#pmenu" /></svg>
      </div>
      <div class="flow-body">
        <svg class="i flow-ic"><use href="#wrap0" /></svg>
        <i class="flow-line"></i>
        <svg class="i flow-ic2"><use href="#fr" /></svg>
        <svg class="i flow-ic2"><use href="#fr" /></svg>
        <i class="flow-line"></i>
        <span>Um</span><span>Te</span><span>Ko</span>
      </div>
    </div>

    <!-- export dialog -->
    <div class="dlg">
      <div class="dlg-title">EPUB – Exportoptionen bei umfließbarem Layout</div>
      <div class="dlg-in">
        <div class="dlg-side">
          <ul class="dlist">
            <li v-for="it in listItems" :key="it" :class="{ cur: it === 'Objekt' }">{{ it }}</li>
          </ul>
          <div class="dscroll"><i class="up"></i><i class="down"></i></div>
        </div>
        <div class="dlg-main">
          <h3>Objekt</h3>
          <div class="chk c1st"><span class="box"><svg><use href="#tick" /></svg></span>Aussehen aus Layout beibehalten</div>
          <div class="chk c2nd"><span class="box"></span>Vorhandenes Bild für Grafikobjekte verwenden</div>
          <fieldset class="group">
            <legend>CSS</legend>
            <div class="frow"><label class="la">CSS-Größe:</label><span class="dsel s171">Fester Wert</span></div>
            <div class="frow"><label class="la">Layout:</label><span class="dsel s182">Zentrieren</span></div>
            <div class="frow"><label class="lb">Abstand davor:</label><i class="spin big"></i><span class="num">0</span><span class="unit">Pixel</span></div>
            <div class="frow"><label class="lb">Abstand danach:</label><i class="spin big"></i><span class="num">0</span><span class="unit">Pixel</span></div>
            <div class="frow brk"><span class="box"></span><span class="brk-t">Seitenumbruch einfügen</span><span class="dsel s145 disabled">Vor Bild</span></div>
          </fieldset>
          <div class="chk c3rd"><span class="box"></span>Objektexporteinstellungen ignorieren</div>
          <div class="btns"><button type="button">OK</button><button type="button">Abbrechen</button></div>
        </div>
      </div>
    </div>
  </div>
</template>

<style>
html, body { margin: 0; background: #4a4a4a; overflow: hidden; }
</style>

<style scoped>
.app { position: relative; width: 1920px; height: 1039px; overflow: hidden; background: #4a4a4a; color: #c8c8c8; font: 12px "Noto Sans", "Liberation Sans", sans-serif; display: flex; flex-direction: column; }
.app i { font-style: normal; display: block; flex: none; }
.sprite { position: absolute; }
svg { flex: none; color: #c8c8c8; }
.i { width: 16px; height: 16px; }
.i18 { width: 18px; height: 16px; }
.i14 { width: 14px; height: 14px; }
.i12 { width: 12px; height: 12px; }
.i8 { width: 8px; height: 8px; color: #999; }
.dim { opacity: .5; }
.ml3 { margin-left: 3px; } .ml4 { margin-left: 3px; } .ml5 { margin-left: 7px; } .ml6 { margin-left: 6px; } .ml12 { margin-left: 7px; } .ml21 { margin-left: 24px; }
.flex1 { flex: 1; }

/* menu bar */
.menubar { height: 30px; flex: none; display: flex; align-items: center; background: linear-gradient(#4e4e4e, #474747); border-bottom: 1px solid #2c2c2c; position: relative; }
.logo { width: 47px; padding-left: 9px; box-sizing: border-box; font: bold 22px "Liberation Sans", sans-serif; color: #9c2f68; }
.menus { display: flex; gap: 16.500px; width: 483px; font-size: 11.500px; color: #cfcfcf; }
.vsep { width: 1px; height: 22px; background: #3a3a3a; }
.s2 { margin: 0 -6px 0 18px; }
.br { margin-left: 16px; width: 15px; height: 15px; line-height: 14px; text-align: center; border: 1px solid #999; font-size: 9px; background: #3a3a3a; }
.zoomlvl { margin-left: 28px; width: 47px; font-size: 11.500px; }
.caret { width: 0; height: 0; border: 3px solid transparent; border-top: 4px solid #c8c8c8; border-bottom: 0; }
.menu-ico { display: flex; align-items: center; gap: 3px; margin-left: 17px; width: 31px; }
.mi { width: 18px; height: 16px; }
.buch { margin-left: 12px; width: 34px; font-size: 11.500px; }
.c2 { margin: 0 13px 0 6px; }
.search { margin-left: 11px; width: 110px; height: 16px; background: #a2a2a2; border: 1px solid #333; box-sizing: border-box; display: flex; align-items: center; padding-left: 2px; }
.srch { width: 12px; height: 12px; }
.winbtns { margin: 0 4px 12px 25px; width: 101px; height: 18px; display: grid; grid-template-columns: 27px 27px 1fr; background: linear-gradient(#4a4a4a, #3d3d3d); border: 1px solid #1d1d1d; border-top: 0; border-radius: 0 0 4px 4px; box-sizing: border-box; }
.winbtns span { display: flex; align-items: center; justify-content: center; border-right: 1px solid #222; }
.winbtns span:last-child { border: 0; }
.w-min { width: 10px; height: 3px; background: #eee; margin-top: 6px; }
.w-res { width: 12px; height: 12px; }
.w-x { color: #fff; font-weight: bold; font-size: 16px; line-height: 1; }

/* control bar */
.ctl { height: 47px; flex: none; display: grid; box-sizing: border-box; border-bottom: 1px solid #2c2c2c; background: #4b4b4b;
  grid-template-columns: 22px 31px 99px 96px 22px 105px 23px 102px 55px 31px 61px 44px 84px 85px 57px 95px 138px 110px 29px 137px 446px 23px 25px; }
.cell { min-width: 0; height: 46px; box-sizing: border-box; }
.ctr { display: flex; align-items: center; justify-content: center; }
.col { display: flex; flex-direction: column; gap: 7px; padding-top: 5px; }
.row { height: 14px; display: flex; align-items: center; }
.row.end { justify-content: flex-end; padding-right: 6px; }
.sep { box-shadow: inset 1px 0 0 #3a3a3a; }
.p6 { padding-left: 6px; } .p7 { padding-left: 7px; } .p8 { padding-left: 8px; } .p9 { padding-left: 9px; } .p4 { padding-left: 4px; }
.g11 { gap: 10px; } .g8 { gap: 8px; } .g10 { gap: 10px; } .g6 { gap: 5px; }
.grip i { width: 3px; height: 18px; margin: 13px 0 0 5px; background: repeating-linear-gradient(#888 0 1px, transparent 1px 2px); }
.ref { width: 20px; height: 20px; }
label { color: #c8c8c8; }
.l13 { width: 13px; font-size: 10px; color: #b9c8d8; }
.spin { width: 12px; height: 14px; box-sizing: border-box; border: 1px solid #333; background: #5e5e5e; position: relative; margin-right: 2px; }
.spin::before, .spin::after { content: ""; position: absolute; left: 2px; width: 0; height: 0; border: 3px solid transparent; }
.spin::before { border-bottom: 4px solid #ccc; border-top: 0; top: 1px; }
.spin::after { bottom: 1px; border-top: 4px solid #ccc; border-bottom: 0; }
.inp { height: 14px; line-height: 13px; box-sizing: border-box; background: #a3a3a3; border: 1px solid #2f2f2f; color: #222; font-size: 9.500px; padding-left: 3px; white-space: nowrap; overflow: hidden; display: block; }
.w62 { width: 62px; } .w61 { width: 61px; } .w49 { width: 49px; } .w50 { width: 50px; } .w38 { width: 38px; } .w47 { width: 47px; } .w117 { width: 117px; }
.drop { width: 12px; height: 14px; box-sizing: border-box; border: 1px solid #333; background: #616161; position: relative; margin-left: 1px; }
.drop::before { content: ""; position: absolute; left: 2px; top: 4px; width: 0; height: 0; border: 3.500px solid transparent; border-top: 5px solid #eee; border-bottom: 0; }
.chainbtn { width: 17px; height: 21px; background: #2c2c2c; display: flex; align-items: center; justify-content: center; margin-left: -3px; }
.pbox { width: 25px; height: 26px; font: 22px/26px "Liberation Serif", serif; color: #bbb; text-align: center; margin-left: -6px;
  background:
    linear-gradient(#bbb, #bbb) 0 0 / 4px 1px no-repeat, linear-gradient(#bbb, #bbb) 0 0 / 1px 4px no-repeat,
    linear-gradient(#bbb, #bbb) 100% 0 / 4px 1px no-repeat, linear-gradient(#bbb, #bbb) 100% 0 / 1px 4px no-repeat,
    linear-gradient(#bbb, #bbb) 0 100% / 4px 1px no-repeat, linear-gradient(#bbb, #bbb) 0 100% / 1px 4px no-repeat,
    linear-gradient(#bbb, #bbb) 100% 100% / 4px 1px no-repeat, linear-gradient(#bbb, #bbb) 100% 100% / 1px 4px no-repeat; }
.swatch { width: 16px; height: 17px; background: #8fd0c4; border: 1px solid #333; box-sizing: border-box; margin-right: 3px; }
.swatch.stroke { background: linear-gradient(135deg, #fff 42%, #e11 42% 58%, #fff 58%); }
.play { width: 11px; height: 14px; box-sizing: border-box; border: 1px solid #333; background: #616161; position: relative; }
.play::before { content: ""; position: absolute; left: 3px; top: 2px; width: 0; height: 0; border: 4px solid transparent; border-left: 5px solid #ddd; border-right: 0; }
.strokeline { width: 66px; height: 14px; box-sizing: border-box; background: #8a8a8a; border: 1px solid #333; padding: 2px; display: block; }
.strokeline b { display: block; height: 100%; background: #000; }
.fx { font: italic 15px "Liberation Serif", serif; color: #aaa; margin-left: 3px; }
.wrapon { width: 21px; height: 20px; background: #2a2a2a; display: flex; align-items: center; justify-content: center; margin: -3px 0; }
.cornerbox { width: 29px; height: 14px; background: linear-gradient(#4a4a4a, #4a4a4a) 4px 4px / 17px 11px no-repeat, #a0a0a0; border: 1px solid #333; box-sizing: border-box; }
.vs { width: 1px; height: 14px; background: #3a3a3a; margin: 0 -3px; }
.cbx { width: 12px; height: 12px; box-sizing: border-box; background: #4f4f4f; border: 1px solid #333; }
.auto { margin-left: 3px; font: 9.800px Roboto, "Noto Sans", sans-serif; white-space: nowrap; color: #c0c0c0; }
.bolt { width: 10px; height: 18px; color: #aaa; }
.pm { width: 14px; height: 8px; color: #d0d0d0; }

/* work area */
.work { height: 961px; display: grid; grid-template-columns: 33px 1677px 210px; }
.tools { background: #4a4a4a; border-right: 1px solid #222; box-sizing: border-box; }
.strip { height: 12px; background: #333; display: flex; align-items: center; color: #888; font-size: 7px; padding-left: 3px; }
.strip.right { justify-content: flex-end; padding-right: 4px; }
.chevs { letter-spacing: -1px; }
.hgrip { height: 3px; margin: 2px 4px 6px; background: repeating-linear-gradient(90deg, #aaa 0 1px, transparent 1px 2px); }
.tgroup { padding: 3px 0 3.500px; border-bottom: 1px solid #333; }
.tgroup.first { padding-top: 5px; }
.tool { position: relative; height: 21px; display: flex; align-items: center; justify-content: center; }
.tool.on { background: #2c2c2c; margin: 0 4px; height: 20px; }
.tool.more::after { content: ""; position: absolute; right: 3px; bottom: 2px; border: 2px solid transparent; border-right-color: #ddd; border-bottom-color: #ddd; }
.ti { width: 18px; height: 16px; }
.ttool { font: 21px/21px "Liberation Serif", serif; color: #ccc; }
.fs { padding: 0; height: 48px; box-sizing: border-box; }
.fsbox { position: relative; height: 34px; }
.fs-fill { position: absolute; left: 6px; top: 0; width: 12px; height: 12px; background: #8fd0c4; border: 1px solid #ccc; z-index: 1; }
.fs-stroke { position: absolute; left: 14px; top: 8px; width: 11px; height: 11px; background: linear-gradient(135deg, #fff 38%, #e11 38% 62%, #fff 62%); }
.fs-def { position: absolute; left: 6px; top: 22px; width: 8px; height: 7px; background: linear-gradient(135deg, #eee 40%, #e11 40% 60%, #eee 60%); border: 1px solid #222; }
.fs-swap { position: absolute; left: 20px; top: -1px; font-size: 9px; line-height: 9px; color: #ddd; }
.fsmode { display: flex; align-items: center; gap: 5px; padding-left: 6px; height: 14px; }
.fm-box { width: 9px; height: 9px; background: #666; border: 1px solid #ccc; }
.fm-t { font: bold 11px "Liberation Serif", serif; color: #888; }
.bt { padding: 5px 0 3px; }
.nob { border: 0; padding-top: 8px; }
.darkbtn { position: relative; width: 23px; height: 19px; margin-left: 4px; background: #2c2c2c; display: flex; align-items: center; justify-content: center; }
.dswatch { width: 12px; height: 12px; background: #8fd0c4; }

.doc { display: grid; grid-template-columns: 16px 1645px 16px; grid-template-rows: 19px 16px 874px 37px 15px; min-height: 0; }
.tabs { grid-column: 1 / 4; display: flex; background: #3a3a3a; padding-left: 1px; box-sizing: border-box; }
.tab { display: flex; align-items: center; padding: 0 6px 0 9px; color: #8c8c8c; font-size: 11.100px; background: #424242; border-right: 1px solid #2c2c2c; white-space: nowrap; }
.tab em { font-style: normal; margin-left: 14px; font-size: 12px; color: #bbb; }
.tab.active { background: #484848; color: #cfcfcf; }
.corner { background: #1e1e1e; border-right: 1px solid #555; box-sizing: border-box; }
.hruler { background: #1e1e1e; display: flex; overflow: hidden; padding-left: 27.600px; box-sizing: border-box; }
.hcell { flex: none; width: 47.240px; box-sizing: border-box; border-left: 1px solid #999; color: #c5d3e2; font-size: 9.500px; line-height: 12px; padding-left: 2px;
  background: repeating-linear-gradient(90deg, #8a8a8a 0 1px, transparent 1px 4.724px) 3.700px 100% / 100% 3px no-repeat; }
.vscroll { grid-column: 3; grid-row: 2 / 5; background: #3a3a3a; display: flex; flex-direction: column; align-items: center; border-left: 1px solid #2a2a2a; box-sizing: border-box; }
.sb-up { margin-top: 6px; border: 4px solid transparent; border-bottom: 5px solid #ddd; border-top: 0; }
.sb-down { margin: 6px 0 5px; border: 4px solid transparent; border-top: 5px solid #ddd; border-bottom: 0; }
.sb-track { flex: 1; width: 100%; display: flex; flex-direction: column; justify-content: flex-end; }
.sb-thumb { height: 469px; background: #8e8e8e; margin-bottom: 1px; }
.vruler { background: #1e1e1e; padding-top: 12px; overflow: hidden; box-sizing: border-box; }
.vcell { height: 47.240px; box-sizing: border-box; border-top: 1px solid #999; display: flex; flex-direction: column; color: #c5d3e2; font-size: 9.500px; line-height: 10.500px; padding-left: 1px;
  background: repeating-linear-gradient(#8a8a8a 0 1px, transparent 1px 4.724px) 100% 3.700px / 3px 100% no-repeat; }

.canvas { position: relative; background: #fff; overflow: hidden; font-family: "Liberation Serif", serif; color: #111; }
.page { position: absolute; left: 644px; top: -10px; width: 995px; height: 767px; box-sizing: border-box; border: 3px solid #000; border-width: 0 3px 3px 1px; }
.guide { position: absolute; top: 0; width: 1px; }
.g-mag { left: 703px; height: 200px; background: #e400e4; width: 2px; }
.g-a { left: 1127px; height: 120px; background: #8a35e8; }
.g-b { left: 1150px; height: 120px; background: #8a35e8; }
.g-r { left: 1575px; height: 695px; background: #9a45ee; }
.frame { position: absolute; left: 873px; width: 702px; box-sizing: border-box; }
.f-body { top: 38px; height: 456px; border-top: 1px solid #8ab4f0; border-left: 1px solid #8ab4f0; }
.ln { margin: 0; height: 24px; font-size: 19.200px; line-height: 24px; white-space: nowrap; text-align: justify; text-align-last: justify; position: relative; top: -5px; }
.footrule { position: absolute; left: 1100px; top: 493px; width: 183px; height: 2px; background: #111; }
.f-foot1 { top: 494px; height: 140px; border-top: 1px solid #9fc0f0; border-bottom: 1px solid #9fc0f0; padding-top: 5px; overflow: hidden; }
.f-foot2 { top: 634px; height: 60px; padding-top: 5px; border-bottom: 1px solid #e050e0; overflow: hidden; }
.fn { margin: 0; height: 20px; font-size: 14.500px; line-height: 20px; white-space: nowrap; text-align: justify; text-align-last: justify; }

.bot-l { background: #4d4d4d; border-right: 1px solid #3a3a3a; box-sizing: border-box; }
.bot-m { background: #404040; }
.status { grid-column: 1 / 4; display: flex; align-items: center; background: #4a4a4a; font-size: 10px; }
.st-left { width: 472px; flex: none; display: flex; align-items: center; height: 15px; padding-left: 17px; box-sizing: border-box; }
.st-pref { width: 18px; height: 10px; margin-left: 1px; }
.st-share { width: 14px; height: 12px; margin-left: 7px; }
.nv { width: 0; height: 0; border: 4px solid transparent; }
.nv-first { margin-left: 12px; border-right: 5px solid #777; border-left: 0; box-shadow: -2px 0 0 -1px #777; }
.nv-prev { margin-left: 10px; border-right: 5px solid #888; border-left: 0; }
.st-num { margin-left: 8px; width: 85px; }
.tri { border: 3.500px solid transparent; border-top: 5px solid #ddd; border-bottom: 0; }
.nv-next { margin-left: 13px; border-left: 5px solid #777; border-right: 0; }
.nv-last { margin-left: 9px; border-left: 5px solid #777; border-right: 0; }
.st-page { width: 12px; height: 14px; margin-left: 9px; }
.st-prof { margin-left: 13px; width: 108px; white-space: nowrap; color: #c8d2dc; font: 9.800px Roboto, sans-serif; }
.dot { width: 10px; height: 10px; border-radius: 50%; background: #5ca331; margin-left: 4px; }
.st-err { margin-left: 5px; width: 74px; font: 9.800px Roboto, sans-serif; }
.c3 { border-top-color: #bbb; }
.hscroll { flex: 1; height: 15px; display: flex; align-items: center; background: #333; }
.hs-l { margin-left: 4px; border: 4px solid transparent; border-right: 5px solid #ddd; border-left: 0; }
.hs-r { margin: 0 6px 0 3px; border: 4px solid transparent; border-left: 5px solid #ddd; border-right: 0; }
.hs-track { flex: 1; height: 100%; padding-left: 389px; box-sizing: border-box; }
.hs-thumb { width: 468px; height: 100%; background: #8e8e8e; }
.st-right { width: 40px; flex: none; display: flex; align-items: center; gap: 4px; justify-content: flex-end; padding-right: 1px; box-sizing: border-box; background: #4a4a4a; height: 15px; }
.sq { width: 11px; height: 9px; border: 1px solid #bbb; box-sizing: border-box; }

/* right panels */
.panels { background: #2e2e2e; display: flex; flex-direction: column; padding-left: 2px; min-height: 0; overflow: hidden; font-family: Roboto, "Noto Sans", sans-serif; }
.pan { display: flex; flex-direction: column; background: #4a4a4a; flex: none; }
.h286 { height: 286px; } .h269 { height: 269px; }
.grow { flex: 1; }
.mt4 { margin-top: 4px; } .mt3 { margin-top: 3px; }
.phead { height: 17px; flex: none; background: #323232; display: flex; align-items: center; justify-content: space-between; padding-right: 5px; border-bottom: 1px solid #2a2a2a; box-sizing: border-box; }
.ptab { height: 17px; box-sizing: border-box; display: flex; align-items: center; gap: 3px; padding-left: 4px; background: #4a4a4a; font: bold 9.500px "Noto Sans", sans-serif; color: #e2e6ea; white-space: nowrap; }
.t46 { width: 46px; } .t89 { width: 89px; } .t71 { width: 71px; } .t74 { width: 74px; }
.chev { width: 7px; height: 12px; color: #ddd; }
.radios { height: 25px; flex: none; display: flex; align-items: center; padding-left: 11px; border-bottom: 1px solid #5c5c5c; font-size: 10px; color: #c8d2dc; box-sizing: border-box; }
.radio { width: 12px; height: 12px; border-radius: 50%; background: #5c5c5c; border: 1px solid #2a2a2a; box-sizing: border-box; position: relative; margin-right: 4px; }
.radio.on::before { content: ""; position: absolute; left: 3px; top: 3px; width: 4px; height: 4px; background: #ddd; border-radius: 50%; }
.rl { white-space: nowrap; }
.w65 { width: 59px; } .w59 { width: 53px; }
.cbx.sm { background: #474747; margin-right: 5px; }
.dimt { color: #777; }
.plist { flex: 1; min-height: 0; display: flex; justify-content: flex-end; position: relative; }
.pscroll { width: 14px; background: #3a3a3a; display: flex; flex-direction: column; justify-content: space-between; align-items: center; padding: 4px 0; box-sizing: border-box; }
.up { border: 3.500px solid transparent; border-bottom: 4px solid #999; border-top: 0; }
.down { border: 3.500px solid transparent; border-top: 4px solid #999; border-bottom: 0; }
.pfoot { height: 15px; flex: none; display: flex; align-items: center; justify-content: flex-end; gap: 14px; border-top: 1px solid #5c5c5c; padding-right: 1px; box-sizing: border-box; }
.pfoot.short { height: 17px; border: 0; padding-right: 1px; }
.pfoot.tall { height: 21px; }
.pfoot.last { padding-right: 18px; gap: 17px; }
.pf { width: 15px; height: 13px; color: #c8c8c8; }
.pf + .i8 { margin-left: 1px; }
.cond { padding: 3px 0 0 3px; flex: 1; box-sizing: border-box; }
.condrow { flex: 1; height: 20px; display: flex; align-items: center; border: 1px solid #303030; box-sizing: border-box; }
.ceye { width: 20px; height: 100%; margin-left: 2px; display: flex; align-items: center; justify-content: center; border-right: 1px solid #5c5c5c; box-sizing: border-box; }
.eye { width: 14px; height: 10px; color: #c0c0c0; }
.cbx2 { width: 21px; height: 100%; border-right: 1px solid #5c5c5c; box-sizing: border-box; }
.ctext { padding-left: 4px; font-size: 9.800px; color: #b9c4d0; }
.selrow { height: 26px; flex: none; display: flex; align-items: center; justify-content: flex-end; padding-right: 18px; margin-left: 4px; box-sizing: border-box; font-size: 9.800px; }
.selrow label { margin-right: 7px; }
.bb { border-bottom: 1px solid #5c5c5c; }
.pselect { width: 125px; height: 14px; box-sizing: border-box; border: 1px solid #2d2d2d; background: linear-gradient(#5e5e5e, #4a4a4a); padding-left: 2px; line-height: 12px; position: relative; color: #d0d0d0; }
.pselect::before { content: ""; position: absolute; right: 13px; top: 1px; bottom: 1px; width: 1px; background: #6c6c6c; }
.pselect::after { content: ""; position: absolute; right: 3px; top: 3px; border: 3.500px solid transparent; border-top: 5px solid #eee; border-bottom: 0; }
.urlrow { height: 21px; flex: none; display: flex; align-items: center; padding: 2px 6px 0 5px; box-sizing: border-box; font-size: 10px; }
.urlrow label { width: 23px; }
.urlinp { flex: 1; height: 14px; background: #a3a3a3; border: 1px solid #2d2d2d; box-sizing: border-box; font-size: 9.500px; line-height: 12px; padding-left: 3px; color: #15233a; }
.namerow { height: 24px; flex: none; display: flex; align-items: center; padding-left: 5px; border-bottom: 1px solid #2d2d2d; box-sizing: border-box; font-size: 10px; color: #d8d8d8; }
.namerow b { width: 129px; }
.upcaret { border: 3px solid transparent; border-bottom: 4px solid #ddd; border-top: 0; margin-right: 4px; }
.nsep { width: 1px; height: 16px; background: #5c5c5c; }
.nic { width: 12px; height: 13px; margin: 0 9px 0 6px; color: #c8c8c8; }

/* floating */
.float { position: absolute; background: #4a4a4a; box-shadow: 0 0 4px rgba(0, 0, 0, .6); font: 9.800px Roboto, "Noto Sans", sans-serif; }
.fl-title { height: 14px; background: #2f2f2f; border-radius: 4px 4px 0 0; display: flex; justify-content: flex-end; align-items: center; gap: 10px; padding-right: 5px; color: #aaa; font-size: 7px; }
.fl-title .xx { font-size: 13px; color: #ccc; font-weight: bold; line-height: 1; }
.fl-tabs { height: 17px; background: #343434; display: flex; align-items: center; padding-right: 5px; }
.fl-tab { height: 17px; display: flex; align-items: center; gap: 2px; white-space: nowrap; font: bold 9.500px "Noto Sans", sans-serif; box-sizing: border-box; }
.fl-tab.on { width: 71px; background: #4a4a4a; color: #eee; padding-left: 5px; }
.fl-tab.wide { width: 79px; }
.fl-tab.off { width: 65px; padding-left: 7px; color: #888; border-right: 1px solid #2a2a2a; }
.auto-l { margin-left: auto; }
.align { left: 110px; top: 739px; width: 209px; height: 225px; }
.fl-body { padding: 3px 5px 0; }
.fl-h { height: 16px; line-height: 16px; color: #c8d2dc; }
.fl-h.h2 { margin-top: 3px; }
.fl-icons { display: flex; gap: 18px; padding: 4px 0 2px 5px; height: 24px; box-sizing: border-box; }
.fl-icons .i { width: 15px; height: 15px; }
.fl-icons .i:nth-child(3) { margin-right: 7px; }
.bb1 { border-bottom: 1px solid #5c5c5c; margin-bottom: 0; }
.fl-icons.two { gap: 16px; height: 22px; }
.fl-use { display: flex; align-items: center; height: 14px; padding-left: 2px; }
.fl-use span:first-of-type { width: 95px; margin-left: 4px; }
.fl-use .inp { width: 46px; background: #7c7c7c; font-size: 9.500px; margin-left: 0; color: #3a3a3a; }
.dimmed { opacity: .45; }
.fl-to { height: 33px; display: flex; align-items: center; padding-left: 53px; gap: 3px; border-bottom: 1px solid #5c5c5c; box-sizing: border-box; }
.fl-to span { margin-right: 1px; }
.fl-to .caret { margin: 8px 0 0 -2px; }
.u2 { margin-top: 3px; }
.flow { left: 604px; top: 190px; width: 209px; height: 237px; }
.flow-body { padding: 5px 0 0 8px; display: flex; flex-direction: column; color: #888; font-size: 10px; gap: 3px; }
.flow-ic { margin-top: 2px; }
.flow-line { height: 1px; width: 190px; background: #5c5c5c; margin: 3px 0; }
.flow-ic2 { margin-bottom: 4px; }
.flow-body span { height: 20px; line-height: 20px; }

/* dialog */
.dlg { position: absolute; left: 622px; top: 221px; width: 677px; height: 597px; box-sizing: border-box; padding: 29px 7px 5px 6px; border: 1px solid rgba(30, 40, 55, .75); border-radius: 7px 7px 5px 5px; background: linear-gradient(rgba(195, 222, 250, .66), rgba(175, 212, 248, .92)); -webkit-backdrop-filter: blur(2.500px); backdrop-filter: blur(2.500px); box-shadow: 5px 6px 18px rgba(0, 0, 0, .65), 0 0 10px rgba(0, 0, 0, .5), inset 0 0 0 1px rgba(255, 255, 255, .45); }
.dlg-title { position: absolute; left: 6px; top: 6px; color: #101820; font: 11.400px/16px "Noto Sans", sans-serif; white-space: nowrap; }
.dlg-in { height: 100%; box-sizing: border-box; padding: 16px 16px 17px 16px; background: #4a4a4a; border: 1px solid #3a3a3a; display: grid; grid-template-columns: 155px 467px; column-gap: 10px; margin: -1px; }
.dlg-side { height: 487px; display: flex; }
.dlist { list-style: none; margin: 0; padding: 0; width: 141px; box-sizing: border-box; border: 1px solid #d8862a; font: 9.600px Roboto, "Noto Sans", sans-serif; letter-spacing: -.3px; color: #c8c8c8; }
.dlist li { height: 16px; line-height: 12px; padding-left: 1px; box-sizing: border-box; border-bottom: 1px solid #333; white-space: nowrap; }
.dlist li.cur { background: #445064; color: #e2e6ea; }
.dscroll { width: 14px; background: #383838; display: flex; flex-direction: column; justify-content: space-between; align-items: center; padding: 4px 0; box-sizing: border-box; }
.dlg-main { display: flex; flex-direction: column; height: 528px; font: 11.500px "DejaVu Sans", sans-serif; color: #c8cdd2; }
.dlg-main h3 { margin: 0; height: 21px; line-height: 18px; font-weight: normal; font-size: 11.500px; border-bottom: 1px solid #5c5c5c; box-sizing: border-box; }
.chk { display: flex; align-items: center; height: 14px; padding-left: 15px; gap: 4px; white-space: nowrap; letter-spacing: -.2px; }
.c1st { margin-top: 21px; } .c2nd { margin-top: 11px; } .c3rd { margin-top: 14px; }
.box { width: 12px; height: 12px; box-sizing: border-box; background: #565656; border: 1px solid #333; display: block; flex: none; }
.box svg { width: 12px; height: 12px; display: block; margin: -1px; }
.group { margin: 18px 6px 0 5px; padding: 9.500px 0 0 0; height: 167px; box-sizing: border-box; border: 1px solid #333; border-radius: 0; min-width: 0; }
.group legend { margin-left: 11px; padding: 0 4px; font-size: 11px; line-height: 10px; }
.frow { display: flex; align-items: center; height: 17px; margin-bottom: 8px; white-space: nowrap; letter-spacing: -.2px; }
.frow label { text-align: right; display: block; color: #c8cdd2; }
.la { width: 74px; margin-right: 7px; }
.lb { width: 136px; margin-right: 7px; }
.dsel { height: 17px; line-height: 15px; box-sizing: border-box; border: 1px solid #2d2d2d; background: linear-gradient(#5c5c5c, #474747); padding-left: 2px; display: block; position: relative; color: #d0d0d0; }
.dsel::before { content: ""; position: absolute; right: 13px; top: 2px; bottom: 2px; width: 1px; background: #707070; }
.dsel::after { content: ""; position: absolute; right: 3px; top: 5px; border: 3.500px solid transparent; border-top: 5px solid #eee; border-bottom: 0; }
.s171 { width: 172px; } .s182 { width: 183px; } .s145 { width: 144px; margin-left: 4px; }
.disabled { background: #4c4c4c; color: #7d7d7d; }
.disabled::before { display: none; }
.disabled::after { border-top-color: #777; }
.spin.big { height: 17px; margin-right: 2px; }
.spin.big::before { top: 2px; } .spin.big::after { bottom: 2px; }
.num { width: 53px; height: 17px; line-height: 15px; box-sizing: border-box; background: #a3a3a3; border: 1px solid #2f2f2f; color: #182a55; padding-left: 2px; }
.unit { margin-left: 6px; }
.brk { margin-top: 18px; padding-left: 136px; }
.brk-t { margin-left: 5px; width: 138px; }
.btns { margin-top: auto; display: flex; justify-content: flex-end; gap: 12px; padding-right: 12px; }
.btns button { width: 88px; height: 19px; padding: 0; background: linear-gradient(#4e4e4e, #444); border: 1px solid #262626; color: #d4d4d4; font: 11.500px "DejaVu Sans", sans-serif; }
</style>
